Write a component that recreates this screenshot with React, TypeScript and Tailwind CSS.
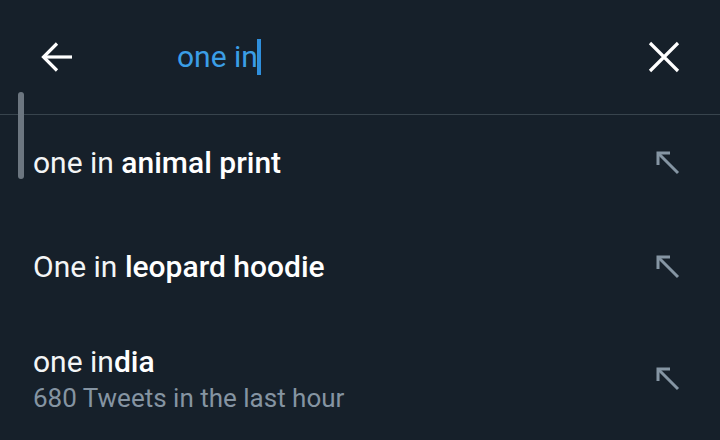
import React from 'react';

const rows = [
  { typed: 'one in', rest: ' animal print' },
  { typed: 'One in', rest: ' leopard hoodie' },
  { typed: 'one in', rest: 'dia', sub: '680 Tweets in the last hour' },
];

function UpLeftArrow() {
  return (
    <svg width="24" height="24" viewBox="0 0 24 24" fill="none" stroke="#8595a3" strokeWidth="3" strokeLinecap="butt">
      <path d="M2 14V2h12" />
      <path d="M2 2l20 20" />
    </svg>
  );
}

export default function App() {
  return (
    <div
      className="relative w-[720px] h-[440px] overflow-hidden bg-[#16202a] text-white"
      style={{ fontFamily: 'Roboto, "Noto Sans", sans-serif' }}
    >
      {/* search header */}
      <div className="flex items-center h-[115px] border-b border-[#38444d] pl-[40px] pr-[40px]">
        <svg width="33" height="32" viewBox="0 0 33 32" fill="none" stroke="white" strokeWidth="3.2">
          <path d="M32 16H4" />
          <path d="M17 2.5 3.5 16 17 29.5" />
        </svg>
        <div className="flex items-center ml-[104px] flex-1">
          <span className="text-[30px] text-[#3b9ee6] leading-none">one in</span>
          <span className="w-[4px] h-[36px] bg-[#2f8fdc] -ml-[1px]" />
        </div>
        <svg width="32" height="32" viewBox="0 0 32 32" fill="none" stroke="white" strokeWidth="3.2">
          <path d="M2 2l28 28M30 2 2 30" />
        </svg>
      </div>

      {/* scrollbar */}
      <div className="absolute left-[18px] top-[92px] w-[6px] h-[87px] rounded-full bg-[#6c7680]" />

      {rows.map((r, i) => (
        <div
          key={i}
          className={`flex items-center pl-[33px] pr-[40px] ${i === 2 ? 'h-[116px] pb-[4px]' : 'h-[104px] pb-[8px]'}`}
        >
          <div className="flex-1">
            <div className="text-[30px] leading-[38px] text-[#f3f5f6]">
              {r.typed}
              <span className="font-medium text-white">{r.rest}</span>
            </div>
            {r.sub && <div className="text-[26px] leading-[34px] text-[#8594a2]">{r.sub}</div>}
          </div>
          <UpLeftArrow />
        </div>
      ))}
    </div>
  );
}
